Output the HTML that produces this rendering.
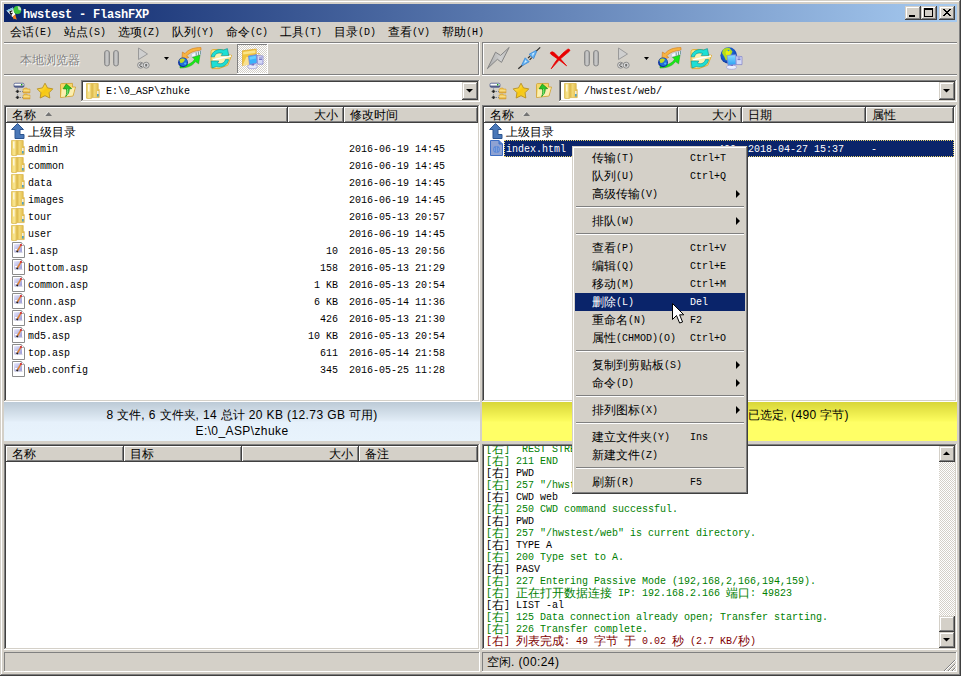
<!DOCTYPE html><html><head><meta charset="utf-8"><style>
*{margin:0;padding:0}
i{font-style:normal}
html,body{width:961px;height:676px;overflow:hidden;background:#d4d0c8}
body>div,body>span,body>svg{position:absolute;display:block}
span{white-space:pre;line-height:12px}
.ms{color:#000;position:absolute}
.ms b,.ms i{position:absolute;top:0;white-space:pre;font-weight:normal;font-style:normal;line-height:12px}
.ms b{top:0px;font-family:"Liberation Mono",monospace;font-size:11px;transform:scaleX(0.90909);transform-origin:0 0}
.ms i{font-family:"Liberation Sans",sans-serif;font-size:12px}
.m{font-family:"Liberation Mono",monospace;font-size:11px;letter-spacing:-0.6px;color:#000;line-height:12px}
.m i, .title i{font-style:normal;font-family:"Liberation Sans",sans-serif;font-size:12px;letter-spacing:0}
.title{font-family:"Liberation Mono",monospace;font-weight:bold;font-size:12px;letter-spacing:-0.2px;color:#fff}
.st{font-family:"Liberation Sans",sans-serif;font-size:12px;letter-spacing:0.4px;color:#000;line-height:12px}
.st i{font-style:normal;font-size:12px;letter-spacing:0}
.dis{font-family:"Liberation Sans",sans-serif;font-size:12px;color:#808080;text-shadow:1px 1px 0 #fff;line-height:12px}
.log div{height:12px;line-height:12px}
</style></head><body><div style="left:0px;top:0px;width:961px;height:676px;background:#d4d0c8"></div><div style="left:0px;top:0px;width:960px;height:1px;background:#d4d0c8"></div><div style="left:0px;top:0px;width:1px;height:675px;background:#d4d0c8"></div><div style="left:1px;top:1px;width:958px;height:1px;background:#ffffff"></div><div style="left:1px;top:1px;width:1px;height:673px;background:#ffffff"></div><div style="left:959px;top:1px;width:1px;height:674px;background:#808080"></div><div style="left:1px;top:674px;width:959px;height:1px;background:#808080"></div><div style="left:960px;top:0px;width:1px;height:676px;background:#404040"></div><div style="left:0px;top:675px;width:961px;height:1px;background:#404040"></div><div style="left:4px;top:4px;width:953px;height:18px;background:linear-gradient(to right,#0a246a,#a6caf0)"></div><span class="title" style="left:23px;top:9px;">hwstest - FlashFXP</span><div style="left:905px;top:6px;width:16px;height:14px;background:#d4d0c8"></div><div style="left:905px;top:6px;width:16px;height:1px;background:#d4d0c8"></div><div style="left:905px;top:6px;width:1px;height:14px;background:#d4d0c8"></div><div style="left:905px;top:19px;width:16px;height:1px;background:#404040"></div><div style="left:920px;top:6px;width:1px;height:14px;background:#404040"></div><div style="left:906px;top:7px;width:14px;height:1px;background:#ffffff"></div><div style="left:906px;top:7px;width:1px;height:12px;background:#ffffff"></div><div style="left:906px;top:18px;width:14px;height:1px;background:#808080"></div><div style="left:919px;top:7px;width:1px;height:12px;background:#808080"></div><div style="left:921px;top:6px;width:16px;height:14px;background:#d4d0c8"></div><div style="left:921px;top:6px;width:16px;height:1px;background:#d4d0c8"></div><div style="left:921px;top:6px;width:1px;height:14px;background:#d4d0c8"></div><div style="left:921px;top:19px;width:16px;height:1px;background:#404040"></div><div style="left:936px;top:6px;width:1px;height:14px;background:#404040"></div><div style="left:922px;top:7px;width:14px;height:1px;background:#ffffff"></div><div style="left:922px;top:7px;width:1px;height:12px;background:#ffffff"></div><div style="left:922px;top:18px;width:14px;height:1px;background:#808080"></div><div style="left:935px;top:7px;width:1px;height:12px;background:#808080"></div><div style="left:939px;top:6px;width:16px;height:14px;background:#d4d0c8"></div><div style="left:939px;top:6px;width:16px;height:1px;background:#d4d0c8"></div><div style="left:939px;top:6px;width:1px;height:14px;background:#d4d0c8"></div><div style="left:939px;top:19px;width:16px;height:1px;background:#404040"></div><div style="left:954px;top:6px;width:1px;height:14px;background:#404040"></div><div style="left:940px;top:7px;width:14px;height:1px;background:#ffffff"></div><div style="left:940px;top:7px;width:1px;height:12px;background:#ffffff"></div><div style="left:940px;top:18px;width:14px;height:1px;background:#808080"></div><div style="left:953px;top:7px;width:1px;height:12px;background:#808080"></div><svg style="left:905px;top:6px;" width="16" height="14" viewBox="0 0 16 14"><rect x="4" y="9" width="6" height="2" fill="#000"/></svg><svg style="left:921px;top:6px;" width="16" height="14" viewBox="0 0 16 14"><rect x="3.5" y="2.5" width="8" height="8" fill="none" stroke="#000"/><rect x="3" y="2" width="9" height="2" fill="#000"/></svg><svg style="left:939px;top:6px;" width="16" height="14" viewBox="0 0 16 14"><path d="M4 3 L11 10 M5 3 L12 10 M11 3 L4 10 M12 3 L5 10" stroke="#000" stroke-width="1"/></svg><span class="ms" style="left:10px;top:26px;"><i style="left:0px">会话</i><b style="left:24px">(E)</b></span><span class="ms" style="left:64px;top:26px;"><i style="left:0px">站点</i><b style="left:24px">(S)</b></span><span class="ms" style="left:118px;top:26px;"><i style="left:0px">选项</i><b style="left:24px">(Z)</b></span><span class="ms" style="left:172px;top:26px;"><i style="left:0px">队列</i><b style="left:24px">(Y)</b></span><span class="ms" style="left:226px;top:26px;"><i style="left:0px">命令</i><b style="left:24px">(C)</b></span><span class="ms" style="left:280px;top:26px;"><i style="left:0px">工具</i><b style="left:24px">(T)</b></span><span class="ms" style="left:334px;top:26px;"><i style="left:0px">目录</i><b style="left:24px">(D)</b></span><span class="ms" style="left:388px;top:26px;"><i style="left:0px">查看</i><b style="left:24px">(V)</b></span><span class="ms" style="left:442px;top:26px;"><i style="left:0px">帮助</i><b style="left:24px">(H)</b></span><div style="left:4px;top:42px;width:475px;height:1px;background:#808080"></div><div style="left:4px;top:43px;width:476px;height:1px;background:#ffffff"></div><div style="left:478px;top:42px;width:1px;height:33px;background:#808080"></div><div style="left:479px;top:42px;width:1px;height:34px;background:#ffffff"></div><div style="left:4px;top:74px;width:475px;height:1px;background:#808080"></div><div style="left:4px;top:75px;width:476px;height:1px;background:#ffffff"></div><div style="left:482px;top:42px;width:475px;height:1px;background:#808080"></div><div style="left:483px;top:43px;width:474px;height:1px;background:#ffffff"></div><div style="left:482px;top:42px;width:1px;height:33px;background:#808080"></div><div style="left:483px;top:43px;width:1px;height:32px;background:#ffffff"></div><div style="left:482px;top:74px;width:475px;height:1px;background:#808080"></div><div style="left:482px;top:75px;width:475px;height:1px;background:#ffffff"></div><div style="left:81px;top:80px;width:399px;height:22px;background:#ffffff"></div><div style="left:81px;top:80px;width:399px;height:1px;background:#808080"></div><div style="left:81px;top:80px;width:1px;height:22px;background:#808080"></div><div style="left:81px;top:101px;width:399px;height:1px;background:#ffffff"></div><div style="left:479px;top:80px;width:1px;height:22px;background:#ffffff"></div><div style="left:82px;top:81px;width:397px;height:1px;background:#404040"></div><div style="left:82px;top:81px;width:1px;height:20px;background:#404040"></div><div style="left:82px;top:100px;width:397px;height:1px;background:#d4d0c8"></div><div style="left:478px;top:81px;width:1px;height:20px;background:#d4d0c8"></div><div style="left:462px;top:82px;width:16px;height:18px;background:#d4d0c8"></div><div style="left:462px;top:82px;width:16px;height:1px;background:#d4d0c8"></div><div style="left:462px;top:82px;width:1px;height:18px;background:#d4d0c8"></div><div style="left:462px;top:99px;width:16px;height:1px;background:#404040"></div><div style="left:477px;top:82px;width:1px;height:18px;background:#404040"></div><div style="left:463px;top:83px;width:14px;height:1px;background:#ffffff"></div><div style="left:463px;top:83px;width:1px;height:16px;background:#ffffff"></div><div style="left:463px;top:98px;width:14px;height:1px;background:#808080"></div><div style="left:476px;top:83px;width:1px;height:16px;background:#808080"></div><svg style="left:462px;top:82px;" width="16" height="18" viewBox="0 0 16 18"><path d="M4 7 H11 L7.5 10.5 Z" fill="#000"/></svg><span class="ms" style="left:106px;top:85px;"><b style="left:0px">E:\0_ASP\zhuke</b></span><div style="left:559px;top:80px;width:398px;height:22px;background:#ffffff"></div><div style="left:559px;top:80px;width:398px;height:1px;background:#808080"></div><div style="left:559px;top:80px;width:1px;height:22px;background:#808080"></div><div style="left:559px;top:101px;width:398px;height:1px;background:#ffffff"></div><div style="left:956px;top:80px;width:1px;height:22px;background:#ffffff"></div><div style="left:560px;top:81px;width:396px;height:1px;background:#404040"></div><div style="left:560px;top:81px;width:1px;height:20px;background:#404040"></div><div style="left:560px;top:100px;width:396px;height:1px;background:#d4d0c8"></div><div style="left:955px;top:81px;width:1px;height:20px;background:#d4d0c8"></div><div style="left:939px;top:82px;width:16px;height:18px;background:#d4d0c8"></div><div style="left:939px;top:82px;width:16px;height:1px;background:#d4d0c8"></div><div style="left:939px;top:82px;width:1px;height:18px;background:#d4d0c8"></div><div style="left:939px;top:99px;width:16px;height:1px;background:#404040"></div><div style="left:954px;top:82px;width:1px;height:18px;background:#404040"></div><div style="left:940px;top:83px;width:14px;height:1px;background:#ffffff"></div><div style="left:940px;top:83px;width:1px;height:16px;background:#ffffff"></div><div style="left:940px;top:98px;width:14px;height:1px;background:#808080"></div><div style="left:953px;top:83px;width:1px;height:16px;background:#808080"></div><svg style="left:939px;top:82px;" width="16" height="18" viewBox="0 0 16 18"><path d="M4 7 H11 L7.5 10.5 Z" fill="#000"/></svg><span class="ms" style="left:584px;top:85px;"><b style="left:0px">/hwstest/web/</b></span><div style="left:4px;top:105px;width:476px;height:297px;background:#ffffff"></div><div style="left:4px;top:105px;width:476px;height:1px;background:#808080"></div><div style="left:4px;top:105px;width:1px;height:297px;background:#808080"></div><div style="left:4px;top:401px;width:476px;height:1px;background:#ffffff"></div><div style="left:479px;top:105px;width:1px;height:297px;background:#ffffff"></div><div style="left:5px;top:106px;width:474px;height:1px;background:#404040"></div><div style="left:5px;top:106px;width:1px;height:295px;background:#404040"></div><div style="left:5px;top:400px;width:474px;height:1px;background:#d4d0c8"></div><div style="left:478px;top:106px;width:1px;height:295px;background:#d4d0c8"></div><div style="left:482px;top:105px;width:475px;height:297px;background:#ffffff"></div><div style="left:482px;top:105px;width:475px;height:1px;background:#808080"></div><div style="left:482px;top:105px;width:1px;height:297px;background:#808080"></div><div style="left:482px;top:401px;width:475px;height:1px;background:#ffffff"></div><div style="left:956px;top:105px;width:1px;height:297px;background:#ffffff"></div><div style="left:483px;top:106px;width:473px;height:1px;background:#404040"></div><div style="left:483px;top:106px;width:1px;height:295px;background:#404040"></div><div style="left:483px;top:400px;width:473px;height:1px;background:#d4d0c8"></div><div style="left:955px;top:106px;width:1px;height:295px;background:#d4d0c8"></div><div style="left:4px;top:444px;width:476px;height:206px;background:#ffffff"></div><div style="left:4px;top:444px;width:476px;height:1px;background:#808080"></div><div style="left:4px;top:444px;width:1px;height:206px;background:#808080"></div><div style="left:4px;top:649px;width:476px;height:1px;background:#ffffff"></div><div style="left:479px;top:444px;width:1px;height:206px;background:#ffffff"></div><div style="left:5px;top:445px;width:474px;height:1px;background:#404040"></div><div style="left:5px;top:445px;width:1px;height:204px;background:#404040"></div><div style="left:5px;top:648px;width:474px;height:1px;background:#d4d0c8"></div><div style="left:478px;top:445px;width:1px;height:204px;background:#d4d0c8"></div><div style="left:482px;top:444px;width:475px;height:206px;background:#ffffff"></div><div style="left:482px;top:444px;width:475px;height:1px;background:#808080"></div><div style="left:482px;top:444px;width:1px;height:206px;background:#808080"></div><div style="left:482px;top:649px;width:475px;height:1px;background:#ffffff"></div><div style="left:956px;top:444px;width:1px;height:206px;background:#ffffff"></div><div style="left:483px;top:445px;width:473px;height:1px;background:#404040"></div><div style="left:483px;top:445px;width:1px;height:204px;background:#404040"></div><div style="left:483px;top:648px;width:473px;height:1px;background:#d4d0c8"></div><div style="left:955px;top:445px;width:1px;height:204px;background:#d4d0c8"></div><div style="left:6px;top:107px;width:282px;height:16px;background:#d4d0c8"></div><div style="left:6px;top:107px;width:282px;height:1px;background:#ffffff"></div><div style="left:6px;top:107px;width:1px;height:16px;background:#ffffff"></div><div style="left:6px;top:122px;width:282px;height:1px;background:#404040"></div><div style="left:287px;top:107px;width:1px;height:16px;background:#404040"></div><div style="left:7px;top:121px;width:280px;height:1px;background:#808080"></div><div style="left:286px;top:108px;width:1px;height:14px;background:#808080"></div><span class="ms" style="left:12px;top:109px;"><i style="left:0px">名称</i></span><div style="left:288px;top:107px;width:56px;height:16px;background:#d4d0c8"></div><div style="left:288px;top:107px;width:56px;height:1px;background:#ffffff"></div><div style="left:288px;top:107px;width:1px;height:16px;background:#ffffff"></div><div style="left:288px;top:122px;width:56px;height:1px;background:#404040"></div><div style="left:343px;top:107px;width:1px;height:16px;background:#404040"></div><div style="left:289px;top:121px;width:54px;height:1px;background:#808080"></div><div style="left:342px;top:108px;width:1px;height:14px;background:#808080"></div><span class="ms" style="left:314px;top:109px;"><i style="left:0px">大小</i></span><div style="left:344px;top:107px;width:134px;height:16px;background:#d4d0c8"></div><div style="left:344px;top:107px;width:134px;height:1px;background:#ffffff"></div><div style="left:344px;top:107px;width:1px;height:16px;background:#ffffff"></div><div style="left:344px;top:122px;width:134px;height:1px;background:#404040"></div><div style="left:477px;top:107px;width:1px;height:16px;background:#404040"></div><div style="left:345px;top:121px;width:132px;height:1px;background:#808080"></div><div style="left:476px;top:108px;width:1px;height:14px;background:#808080"></div><span class="ms" style="left:350px;top:109px;"><i style="left:0px">修改时间</i></span><div style="left:484px;top:107px;width:194px;height:16px;background:#d4d0c8"></div><div style="left:484px;top:107px;width:194px;height:1px;background:#ffffff"></div><div style="left:484px;top:107px;width:1px;height:16px;background:#ffffff"></div><div style="left:484px;top:122px;width:194px;height:1px;background:#404040"></div><div style="left:677px;top:107px;width:1px;height:16px;background:#404040"></div><div style="left:485px;top:121px;width:192px;height:1px;background:#808080"></div><div style="left:676px;top:108px;width:1px;height:14px;background:#808080"></div><span class="ms" style="left:490px;top:109px;"><i style="left:0px">名称</i></span><div style="left:678px;top:107px;width:64px;height:16px;background:#d4d0c8"></div><div style="left:678px;top:107px;width:64px;height:1px;background:#ffffff"></div><div style="left:678px;top:107px;width:1px;height:16px;background:#ffffff"></div><div style="left:678px;top:122px;width:64px;height:1px;background:#404040"></div><div style="left:741px;top:107px;width:1px;height:16px;background:#404040"></div><div style="left:679px;top:121px;width:62px;height:1px;background:#808080"></div><div style="left:740px;top:108px;width:1px;height:14px;background:#808080"></div><span class="ms" style="left:712px;top:109px;"><i style="left:0px">大小</i></span><div style="left:742px;top:107px;width:124px;height:16px;background:#d4d0c8"></div><div style="left:742px;top:107px;width:124px;height:1px;background:#ffffff"></div><div style="left:742px;top:107px;width:1px;height:16px;background:#ffffff"></div><div style="left:742px;top:122px;width:124px;height:1px;background:#404040"></div><div style="left:865px;top:107px;width:1px;height:16px;background:#404040"></div><div style="left:743px;top:121px;width:122px;height:1px;background:#808080"></div><div style="left:864px;top:108px;width:1px;height:14px;background:#808080"></div><span class="ms" style="left:748px;top:109px;"><i style="left:0px">日期</i></span><div style="left:866px;top:107px;width:88px;height:16px;background:#d4d0c8"></div><div style="left:866px;top:107px;width:88px;height:1px;background:#ffffff"></div><div style="left:866px;top:107px;width:1px;height:16px;background:#ffffff"></div><div style="left:866px;top:122px;width:88px;height:1px;background:#404040"></div><div style="left:953px;top:107px;width:1px;height:16px;background:#404040"></div><div style="left:867px;top:121px;width:86px;height:1px;background:#808080"></div><div style="left:952px;top:108px;width:1px;height:14px;background:#808080"></div><span class="ms" style="left:872px;top:109px;"><i style="left:0px">属性</i></span><div style="left:6px;top:446px;width:118px;height:16px;background:#d4d0c8"></div><div style="left:6px;top:446px;width:118px;height:1px;background:#ffffff"></div><div style="left:6px;top:446px;width:1px;height:16px;background:#ffffff"></div><div style="left:6px;top:461px;width:118px;height:1px;background:#404040"></div><div style="left:123px;top:446px;width:1px;height:16px;background:#404040"></div><div style="left:7px;top:460px;width:116px;height:1px;background:#808080"></div><div style="left:122px;top:447px;width:1px;height:14px;background:#808080"></div><span class="ms" style="left:12px;top:448px;"><i style="left:0px">名称</i></span><div style="left:124px;top:446px;width:118px;height:16px;background:#d4d0c8"></div><div style="left:124px;top:446px;width:118px;height:1px;background:#ffffff"></div><div style="left:124px;top:446px;width:1px;height:16px;background:#ffffff"></div><div style="left:124px;top:461px;width:118px;height:1px;background:#404040"></div><div style="left:241px;top:446px;width:1px;height:16px;background:#404040"></div><div style="left:125px;top:460px;width:116px;height:1px;background:#808080"></div><div style="left:240px;top:447px;width:1px;height:14px;background:#808080"></div><span class="ms" style="left:130px;top:448px;"><i style="left:0px">目标</i></span><div style="left:242px;top:446px;width:117px;height:16px;background:#d4d0c8"></div><div style="left:242px;top:446px;width:117px;height:1px;background:#ffffff"></div><div style="left:242px;top:446px;width:1px;height:16px;background:#ffffff"></div><div style="left:242px;top:461px;width:117px;height:1px;background:#404040"></div><div style="left:358px;top:446px;width:1px;height:16px;background:#404040"></div><div style="left:243px;top:460px;width:115px;height:1px;background:#808080"></div><div style="left:357px;top:447px;width:1px;height:14px;background:#808080"></div><span class="ms" style="left:329px;top:448px;"><i style="left:0px">大小</i></span><div style="left:359px;top:446px;width:119px;height:16px;background:#d4d0c8"></div><div style="left:359px;top:446px;width:119px;height:1px;background:#ffffff"></div><div style="left:359px;top:446px;width:1px;height:16px;background:#ffffff"></div><div style="left:359px;top:461px;width:119px;height:1px;background:#404040"></div><div style="left:477px;top:446px;width:1px;height:16px;background:#404040"></div><div style="left:360px;top:460px;width:117px;height:1px;background:#808080"></div><div style="left:476px;top:447px;width:1px;height:14px;background:#808080"></div><span class="ms" style="left:365px;top:448px;"><i style="left:0px">备注</i></span><div style="left:4px;top:402px;width:476px;height:39px;background:linear-gradient(#bccad6 0px,#e2edf7 19px,#e6f1fb 20px,#e8f3fc 39px)"></div><div style="left:482px;top:402px;width:475px;height:39px;background:linear-gradient(#d8d638 0px,#fcfc5e 19px,#ffff66 20px,#ffff66 39px)"></div><span class="st" style="left:4px;top:409px;width:476px;text-align:center">8 <i>文件</i>, 6 <i>文件夹</i>, 14 <i>总计</i> 20 KB (12.73 GB <i>可用</i>)</span><span class="st" style="left:4px;top:425px;width:476px;text-align:center">E:\0_ASP\zhuke</span><span class="st" style="left:507px;top:409px;width:475px;text-align:center">1 <i>文件</i>, 0 <i>文件夹</i>, 1 <i>已选定</i>, (490 <i>字节</i>)</span><div style="left:4px;top:652px;width:476px;height:20px;background:#d4d0c8"></div><div style="left:4px;top:652px;width:476px;height:1px;background:#808080"></div><div style="left:4px;top:652px;width:1px;height:20px;background:#808080"></div><div style="left:4px;top:671px;width:476px;height:1px;background:#ffffff"></div><div style="left:479px;top:652px;width:1px;height:20px;background:#ffffff"></div><div style="left:482px;top:652px;width:475px;height:20px;background:#d4d0c8"></div><div style="left:482px;top:652px;width:475px;height:1px;background:#808080"></div><div style="left:482px;top:652px;width:1px;height:20px;background:#808080"></div><div style="left:482px;top:671px;width:475px;height:1px;background:#ffffff"></div><div style="left:956px;top:652px;width:1px;height:20px;background:#ffffff"></div><span class="st" style="left:487px;top:656px;"><i>空闲</i>. (00:24)</span><svg style="left:11px;top:123px;" width="16" height="16" viewBox="0 0 16 16"><path d="M6.5 0.5 L12.5 6.5 H9 V11.5 H13 V15.5 H4 V6.5 H0.5 Z" fill="#4a78b8" stroke="#2c5590"/></svg><span class="ms" style="left:28px;top:126px;"><i style="left:0px">上级目录</i></span><svg style="left:11px;top:140px;" width="16" height="16" viewBox="0 0 16 16"><defs><linearGradient id="fg1" x1="0" x2="1"><stop offset="0" stop-color="#edcc5c"/><stop offset="0.5" stop-color="#f9e898"/><stop offset="1" stop-color="#e8c454"/></linearGradient><linearGradient id="fg2" x1="0" x2="1"><stop offset="0" stop-color="#dcb43c"/><stop offset="0.4" stop-color="#f2d878"/><stop offset="1" stop-color="#deb640"/></linearGradient></defs><path d="M5.5 0.5 H12.2 V6.5 H13.2 V14.6 H5.5 Z" fill="url(#fg2)" stroke="#dcb850" stroke-width="0.8"/><path d="M0.5 0.8 Q0.5 0.3 1 0.3 H5.8 V15.2 Q3 16.2 0.5 15.2 Z" fill="url(#fg1)" stroke="#dcbc58" stroke-width="0.8"/><rect x="2.2" y="1.5" width="1.2" height="7" fill="#ffffff" opacity="0.85"/><rect x="11.2" y="8" width="1.3" height="3" fill="#f4f8ff"/><rect x="11.2" y="11" width="1.3" height="2.5" fill="#2a9ae8"/></svg><span class="ms" style="left:28px;top:143px;"><b style="left:0px">admin</b></span><span class="ms" style="left:349px;top:143px;"><b style="left:0px">2016-06-19 14:45</b></span><svg style="left:11px;top:157px;" width="16" height="16" viewBox="0 0 16 16"><defs><linearGradient id="fg1" x1="0" x2="1"><stop offset="0" stop-color="#edcc5c"/><stop offset="0.5" stop-color="#f9e898"/><stop offset="1" stop-color="#e8c454"/></linearGradient><linearGradient id="fg2" x1="0" x2="1"><stop offset="0" stop-color="#dcb43c"/><stop offset="0.4" stop-color="#f2d878"/><stop offset="1" stop-color="#deb640"/></linearGradient></defs><path d="M5.5 0.5 H12.2 V6.5 H13.2 V14.6 H5.5 Z" fill="url(#fg2)" stroke="#dcb850" stroke-width="0.8"/><path d="M0.5 0.8 Q0.5 0.3 1 0.3 H5.8 V15.2 Q3 16.2 0.5 15.2 Z" fill="url(#fg1)" stroke="#dcbc58" stroke-width="0.8"/><rect x="2.2" y="1.5" width="1.2" height="7" fill="#ffffff" opacity="0.85"/><rect x="11.2" y="8" width="1.3" height="3" fill="#f4f8ff"/><rect x="11.2" y="11" width="1.3" height="2.5" fill="#2a9ae8"/></svg><span class="ms" style="left:28px;top:160px;"><b style="left:0px">common</b></span><span class="ms" style="left:349px;top:160px;"><b style="left:0px">2016-06-19 14:45</b></span><svg style="left:11px;top:174px;" width="16" height="16" viewBox="0 0 16 16"><defs><linearGradient id="fg1" x1="0" x2="1"><stop offset="0" stop-color="#edcc5c"/><stop offset="0.5" stop-color="#f9e898"/><stop offset="1" stop-color="#e8c454"/></linearGradient><linearGradient id="fg2" x1="0" x2="1"><stop offset="0" stop-color="#dcb43c"/><stop offset="0.4" stop-color="#f2d878"/><stop offset="1" stop-color="#deb640"/></linearGradient></defs><path d="M5.5 0.5 H12.2 V6.5 H13.2 V14.6 H5.5 Z" fill="url(#fg2)" stroke="#dcb850" stroke-width="0.8"/><path d="M0.5 0.8 Q0.5 0.3 1 0.3 H5.8 V15.2 Q3 16.2 0.5 15.2 Z" fill="url(#fg1)" stroke="#dcbc58" stroke-width="0.8"/><rect x="2.2" y="1.5" width="1.2" height="7" fill="#ffffff" opacity="0.85"/><rect x="11.2" y="8" width="1.3" height="3" fill="#f4f8ff"/><rect x="11.2" y="11" width="1.3" height="2.5" fill="#2a9ae8"/></svg><span class="ms" style="left:28px;top:177px;"><b style="left:0px">data</b></span><span class="ms" style="left:349px;top:177px;"><b style="left:0px">2016-06-19 14:45</b></span><svg style="left:11px;top:191px;" width="16" height="16" viewBox="0 0 16 16"><defs><linearGradient id="fg1" x1="0" x2="1"><stop offset="0" stop-color="#edcc5c"/><stop offset="0.5" stop-color="#f9e898"/><stop offset="1" stop-color="#e8c454"/></linearGradient><linearGradient id="fg2" x1="0" x2="1"><stop offset="0" stop-color="#dcb43c"/><stop offset="0.4" stop-color="#f2d878"/><stop offset="1" stop-color="#deb640"/></linearGradient></defs><path d="M5.5 0.5 H12.2 V6.5 H13.2 V14.6 H5.5 Z" fill="url(#fg2)" stroke="#dcb850" stroke-width="0.8"/><path d="M0.5 0.8 Q0.5 0.3 1 0.3 H5.8 V15.2 Q3 16.2 0.5 15.2 Z" fill="url(#fg1)" stroke="#dcbc58" stroke-width="0.8"/><rect x="2.2" y="1.5" width="1.2" height="7" fill="#ffffff" opacity="0.85"/><rect x="11.2" y="8" width="1.3" height="3" fill="#f4f8ff"/><rect x="11.2" y="11" width="1.3" height="2.5" fill="#2a9ae8"/></svg><span class="ms" style="left:28px;top:194px;"><b style="left:0px">images</b></span><span class="ms" style="left:349px;top:194px;"><b style="left:0px">2016-06-19 14:45</b></span><svg style="left:11px;top:208px;" width="16" height="16" viewBox="0 0 16 16"><defs><linearGradient id="fg1" x1="0" x2="1"><stop offset="0" stop-color="#edcc5c"/><stop offset="0.5" stop-color="#f9e898"/><stop offset="1" stop-color="#e8c454"/></linearGradient><linearGradient id="fg2" x1="0" x2="1"><stop offset="0" stop-color="#dcb43c"/><stop offset="0.4" stop-color="#f2d878"/><stop offset="1" stop-color="#deb640"/></linearGradient></defs><path d="M5.5 0.5 H12.2 V6.5 H13.2 V14.6 H5.5 Z" fill="url(#fg2)" stroke="#dcb850" stroke-width="0.8"/><path d="M0.5 0.8 Q0.5 0.3 1 0.3 H5.8 V15.2 Q3 16.2 0.5 15.2 Z" fill="url(#fg1)" stroke="#dcbc58" stroke-width="0.8"/><rect x="2.2" y="1.5" width="1.2" height="7" fill="#ffffff" opacity="0.85"/><rect x="11.2" y="8" width="1.3" height="3" fill="#f4f8ff"/><rect x="11.2" y="11" width="1.3" height="2.5" fill="#2a9ae8"/></svg><span class="ms" style="left:28px;top:211px;"><b style="left:0px">tour</b></span><span class="ms" style="left:349px;top:211px;"><b style="left:0px">2016-05-13 20:57</b></span><svg style="left:11px;top:225px;" width="16" height="16" viewBox="0 0 16 16"><defs><linearGradient id="fg1" x1="0" x2="1"><stop offset="0" stop-color="#edcc5c"/><stop offset="0.5" stop-color="#f9e898"/><stop offset="1" stop-color="#e8c454"/></linearGradient><linearGradient id="fg2" x1="0" x2="1"><stop offset="0" stop-color="#dcb43c"/><stop offset="0.4" stop-color="#f2d878"/><stop offset="1" stop-color="#deb640"/></linearGradient></defs><path d="M5.5 0.5 H12.2 V6.5 H13.2 V14.6 H5.5 Z" fill="url(#fg2)" stroke="#dcb850" stroke-width="0.8"/><path d="M0.5 0.8 Q0.5 0.3 1 0.3 H5.8 V15.2 Q3 16.2 0.5 15.2 Z" fill="url(#fg1)" stroke="#dcbc58" stroke-width="0.8"/><rect x="2.2" y="1.5" width="1.2" height="7" fill="#ffffff" opacity="0.85"/><rect x="11.2" y="8" width="1.3" height="3" fill="#f4f8ff"/><rect x="11.2" y="11" width="1.3" height="2.5" fill="#2a9ae8"/></svg><span class="ms" style="left:28px;top:228px;"><b style="left:0px">user</b></span><span class="ms" style="left:349px;top:228px;"><b style="left:0px">2016-06-19 14:45</b></span><svg style="left:11px;top:242px;" width="16" height="16" viewBox="0 0 16 16"><path d="M1.5 0.5 H10.5 L13.5 3.5 V15.5 H1.5 Z" fill="#fff" stroke="#8c8c8c"/><path d="M10.5 0.5 V3.5 H13.5" fill="#fff" stroke="#b0b0b0"/><defs><linearGradient id="fpg" x1="0" y1="0" x2="1" y2="1"><stop offset="0" stop-color="#e6e6fa"/><stop offset="1" stop-color="#9a9ad8"/></linearGradient></defs><rect x="3" y="2.2" width="8" height="7.6" fill="url(#fpg)"/><rect x="3.5" y="9.8" width="8" height="0.8" fill="#8080b0" opacity="0.6"/><path d="M10.2 2.6 L6.2 9.4" stroke="#e08030" stroke-width="1.6"/><path d="M10.4 2.2 L9.6 3.6" stroke="#d02030" stroke-width="1.8"/><path d="M6.6 8.8 L5.8 10" stroke="#202020" stroke-width="1.8"/><path d="M4 7.6 H6" stroke="#fff" stroke-width="1.4"/></svg><span class="ms" style="left:28px;top:245px;"><b style="left:0px">1.asp</b></span><span class="ms" style="left:326px;top:245px;"><b style="left:0px">10</b></span><span class="ms" style="left:349px;top:245px;"><b style="left:0px">2016-05-13 20:56</b></span><svg style="left:11px;top:259px;" width="16" height="16" viewBox="0 0 16 16"><path d="M1.5 0.5 H10.5 L13.5 3.5 V15.5 H1.5 Z" fill="#fff" stroke="#8c8c8c"/><path d="M10.5 0.5 V3.5 H13.5" fill="#fff" stroke="#b0b0b0"/><defs><linearGradient id="fpg" x1="0" y1="0" x2="1" y2="1"><stop offset="0" stop-color="#e6e6fa"/><stop offset="1" stop-color="#9a9ad8"/></linearGradient></defs><rect x="3" y="2.2" width="8" height="7.6" fill="url(#fpg)"/><rect x="3.5" y="9.8" width="8" height="0.8" fill="#8080b0" opacity="0.6"/><path d="M10.2 2.6 L6.2 9.4" stroke="#e08030" stroke-width="1.6"/><path d="M10.4 2.2 L9.6 3.6" stroke="#d02030" stroke-width="1.8"/><path d="M6.6 8.8 L5.8 10" stroke="#202020" stroke-width="1.8"/><path d="M4 7.6 H6" stroke="#fff" stroke-width="1.4"/></svg><span class="ms" style="left:28px;top:262px;"><b style="left:0px">bottom.asp</b></span><span class="ms" style="left:320px;top:262px;"><b style="left:0px">158</b></span><span class="ms" style="left:349px;top:262px;"><b style="left:0px">2016-05-13 21:29</b></span><svg style="left:11px;top:276px;" width="16" height="16" viewBox="0 0 16 16"><path d="M1.5 0.5 H10.5 L13.5 3.5 V15.5 H1.5 Z" fill="#fff" stroke="#8c8c8c"/><path d="M10.5 0.5 V3.5 H13.5" fill="#fff" stroke="#b0b0b0"/><defs><linearGradient id="fpg" x1="0" y1="0" x2="1" y2="1"><stop offset="0" stop-color="#e6e6fa"/><stop offset="1" stop-color="#9a9ad8"/></linearGradient></defs><rect x="3" y="2.2" width="8" height="7.6" fill="url(#fpg)"/><rect x="3.5" y="9.8" width="8" height="0.8" fill="#8080b0" opacity="0.6"/><path d="M10.2 2.6 L6.2 9.4" stroke="#e08030" stroke-width="1.6"/><path d="M10.4 2.2 L9.6 3.6" stroke="#d02030" stroke-width="1.8"/><path d="M6.6 8.8 L5.8 10" stroke="#202020" stroke-width="1.8"/><path d="M4 7.6 H6" stroke="#fff" stroke-width="1.4"/></svg><span class="ms" style="left:28px;top:279px;"><b style="left:0px">common.asp</b></span><span class="ms" style="left:314px;top:279px;"><b style="left:0px">1 KB</b></span><span class="ms" style="left:349px;top:279px;"><b style="left:0px">2016-05-13 20:54</b></span><svg style="left:11px;top:293px;" width="16" height="16" viewBox="0 0 16 16"><path d="M1.5 0.5 H10.5 L13.5 3.5 V15.5 H1.5 Z" fill="#fff" stroke="#8c8c8c"/><path d="M10.5 0.5 V3.5 H13.5" fill="#fff" stroke="#b0b0b0"/><defs><linearGradient id="fpg" x1="0" y1="0" x2="1" y2="1"><stop offset="0" stop-color="#e6e6fa"/><stop offset="1" stop-color="#9a9ad8"/></linearGradient></defs><rect x="3" y="2.2" width="8" height="7.6" fill="url(#fpg)"/><rect x="3.5" y="9.8" width="8" height="0.8" fill="#8080b0" opacity="0.6"/><path d="M10.2 2.6 L6.2 9.4" stroke="#e08030" stroke-width="1.6"/><path d="M10.4 2.2 L9.6 3.6" stroke="#d02030" stroke-width="1.8"/><path d="M6.6 8.8 L5.8 10" stroke="#202020" stroke-width="1.8"/><path d="M4 7.6 H6" stroke="#fff" stroke-width="1.4"/></svg><span class="ms" style="left:28px;top:296px;"><b style="left:0px">conn.asp</b></span><span class="ms" style="left:314px;top:296px;"><b style="left:0px">6 KB</b></span><span class="ms" style="left:349px;top:296px;"><b style="left:0px">2016-05-14 11:36</b></span><svg style="left:11px;top:310px;" width="16" height="16" viewBox="0 0 16 16"><path d="M1.5 0.5 H10.5 L13.5 3.5 V15.5 H1.5 Z" fill="#fff" stroke="#8c8c8c"/><path d="M10.5 0.5 V3.5 H13.5" fill="#fff" stroke="#b0b0b0"/><defs><linearGradient id="fpg" x1="0" y1="0" x2="1" y2="1"><stop offset="0" stop-color="#e6e6fa"/><stop offset="1" stop-color="#9a9ad8"/></linearGradient></defs><rect x="3" y="2.2" width="8" height="7.6" fill="url(#fpg)"/><rect x="3.5" y="9.8" width="8" height="0.8" fill="#8080b0" opacity="0.6"/><path d="M10.2 2.6 L6.2 9.4" stroke="#e08030" stroke-width="1.6"/><path d="M10.4 2.2 L9.6 3.6" stroke="#d02030" stroke-width="1.8"/><path d="M6.6 8.8 L5.8 10" stroke="#202020" stroke-width="1.8"/><path d="M4 7.6 H6" stroke="#fff" stroke-width="1.4"/></svg><span class="ms" style="left:28px;top:313px;"><b style="left:0px">index.asp</b></span><span class="ms" style="left:320px;top:313px;"><b style="left:0px">426</b></span><span class="ms" style="left:349px;top:313px;"><b style="left:0px">2016-05-13 21:30</b></span><svg style="left:11px;top:327px;" width="16" height="16" viewBox="0 0 16 16"><path d="M1.5 0.5 H10.5 L13.5 3.5 V15.5 H1.5 Z" fill="#fff" stroke="#8c8c8c"/><path d="M10.5 0.5 V3.5 H13.5" fill="#fff" stroke="#b0b0b0"/><defs><linearGradient id="fpg" x1="0" y1="0" x2="1" y2="1"><stop offset="0" stop-color="#e6e6fa"/><stop offset="1" stop-color="#9a9ad8"/></linearGradient></defs><rect x="3" y="2.2" width="8" height="7.6" fill="url(#fpg)"/><rect x="3.5" y="9.8" width="8" height="0.8" fill="#8080b0" opacity="0.6"/><path d="M10.2 2.6 L6.2 9.4" stroke="#e08030" stroke-width="1.6"/><path d="M10.4 2.2 L9.6 3.6" stroke="#d02030" stroke-width="1.8"/><path d="M6.6 8.8 L5.8 10" stroke="#202020" stroke-width="1.8"/><path d="M4 7.6 H6" stroke="#fff" stroke-width="1.4"/></svg><span class="ms" style="left:28px;top:330px;"><b style="left:0px">md5.asp</b></span><span class="ms" style="left:308px;top:330px;"><b style="left:0px">10 KB</b></span><span class="ms" style="left:349px;top:330px;"><b style="left:0px">2016-05-13 20:54</b></span><svg style="left:11px;top:344px;" width="16" height="16" viewBox="0 0 16 16"><path d="M1.5 0.5 H10.5 L13.5 3.5 V15.5 H1.5 Z" fill="#fff" stroke="#8c8c8c"/><path d="M10.5 0.5 V3.5 H13.5" fill="#fff" stroke="#b0b0b0"/><defs><linearGradient id="fpg" x1="0" y1="0" x2="1" y2="1"><stop offset="0" stop-color="#e6e6fa"/><stop offset="1" stop-color="#9a9ad8"/></linearGradient></defs><rect x="3" y="2.2" width="8" height="7.6" fill="url(#fpg)"/><rect x="3.5" y="9.8" width="8" height="0.8" fill="#8080b0" opacity="0.6"/><path d="M10.2 2.6 L6.2 9.4" stroke="#e08030" stroke-width="1.6"/><path d="M10.4 2.2 L9.6 3.6" stroke="#d02030" stroke-width="1.8"/><path d="M6.6 8.8 L5.8 10" stroke="#202020" stroke-width="1.8"/><path d="M4 7.6 H6" stroke="#fff" stroke-width="1.4"/></svg><span class="ms" style="left:28px;top:347px;"><b style="left:0px">top.asp</b></span><span class="ms" style="left:320px;top:347px;"><b style="left:0px">611</b></span><span class="ms" style="left:349px;top:347px;"><b style="left:0px">2016-05-14 21:58</b></span><svg style="left:11px;top:361px;" width="16" height="16" viewBox="0 0 16 16"><path d="M1.5 0.5 H10.5 L13.5 3.5 V15.5 H1.5 Z" fill="#fff" stroke="#8c8c8c"/><path d="M10.5 0.5 V3.5 H13.5" fill="#fff" stroke="#b0b0b0"/><defs><linearGradient id="fpg" x1="0" y1="0" x2="1" y2="1"><stop offset="0" stop-color="#e6e6fa"/><stop offset="1" stop-color="#9a9ad8"/></linearGradient></defs><rect x="3" y="2.2" width="8" height="7.6" fill="url(#fpg)"/><rect x="3.5" y="9.8" width="8" height="0.8" fill="#8080b0" opacity="0.6"/><path d="M10.2 2.6 L6.2 9.4" stroke="#e08030" stroke-width="1.6"/><path d="M10.4 2.2 L9.6 3.6" stroke="#d02030" stroke-width="1.8"/><path d="M6.6 8.8 L5.8 10" stroke="#202020" stroke-width="1.8"/><path d="M4 7.6 H6" stroke="#fff" stroke-width="1.4"/></svg><span class="ms" style="left:28px;top:364px;"><b style="left:0px">web.config</b></span><span class="ms" style="left:320px;top:364px;"><b style="left:0px">345</b></span><span class="ms" style="left:349px;top:364px;"><b style="left:0px">2016-05-25 11:28</b></span><svg style="left:489px;top:123px;" width="16" height="16" viewBox="0 0 16 16"><path d="M6.5 0.5 L12.5 6.5 H9 V11.5 H13 V15.5 H4 V6.5 H0.5 Z" fill="#4a78b8" stroke="#2c5590"/></svg><span class="ms" style="left:506px;top:126px;"><i style="left:0px">上级目录</i></span><div style="left:504px;top:140px;width:450px;height:17px;background:#0a246a;outline:1px dotted #e8d46a;outline-offset:-1px"></div><svg style="left:489px;top:140px;" width="16" height="16" viewBox="0 0 16 16"><path d="M1.5 0.5 H10 L13.5 4 V15.5 H1.5 Z" fill="#8ea2d2" stroke="#3c6ec4"/><path d="M10 0.5 V4 H13.5" fill="#5a86d0" stroke="#3c6ec4"/><circle cx="7.5" cy="9.4" r="3.4" fill="#5c8ad8"/><path d="M7.5 6.5 V12.3 M5.6 8 V11 M9.4 8 V11" stroke="#8ea8dc" stroke-width="0.7"/></svg><span class="ms" style="left:506px;top:143px;color:#fff"><b style="left:0px">index.html</b></span><span class="ms" style="left:718px;top:143px;color:#fff"><b style="left:0px">490</b></span><span class="ms" style="left:748px;top:143px;color:#fff"><b style="left:0px">2018-04-27 15:37</b></span><span class="ms" style="left:871px;top:143px;color:#fff"><b style="left:0px">-</b></span><div style="left:484px;top:446px;width:455px;height:202px;overflow:hidden"><span class="ms" style="left:2px;top:-3px;color:#008000"><b style="left:0px">[</b><i style="left:6px">右</i><b style="left:18px">]  REST STREAM</b></span><span class="ms" style="left:2px;top:9px;color:#008000"><b style="left:0px">[</b><i style="left:6px">右</i><b style="left:18px">] 211 END</b></span><span class="ms" style="left:2px;top:21px;color:#000000"><b style="left:0px">[</b><i style="left:6px">右</i><b style="left:18px">] PWD</b></span><span class="ms" style="left:2px;top:33px;color:#008000"><b style="left:0px">[</b><i style="left:6px">右</i><b style="left:18px">] 257 &quot;/hwstest&quot; is current directory.</b></span><span class="ms" style="left:2px;top:45px;color:#000000"><b style="left:0px">[</b><i style="left:6px">右</i><b style="left:18px">] CWD web</b></span><span class="ms" style="left:2px;top:57px;color:#008000"><b style="left:0px">[</b><i style="left:6px">右</i><b style="left:18px">] 250 CWD command successful.</b></span><span class="ms" style="left:2px;top:69px;color:#000000"><b style="left:0px">[</b><i style="left:6px">右</i><b style="left:18px">] PWD</b></span><span class="ms" style="left:2px;top:81px;color:#008000"><b style="left:0px">[</b><i style="left:6px">右</i><b style="left:18px">] 257 &quot;/hwstest/web&quot; is current directory.</b></span><span class="ms" style="left:2px;top:93px;color:#000000"><b style="left:0px">[</b><i style="left:6px">右</i><b style="left:18px">] TYPE A</b></span><span class="ms" style="left:2px;top:105px;color:#008000"><b style="left:0px">[</b><i style="left:6px">右</i><b style="left:18px">] 200 Type set to A.</b></span><span class="ms" style="left:2px;top:117px;color:#000000"><b style="left:0px">[</b><i style="left:6px">右</i><b style="left:18px">] PASV</b></span><span class="ms" style="left:2px;top:129px;color:#008000"><b style="left:0px">[</b><i style="left:6px">右</i><b style="left:18px">] 227 Entering Passive Mode (192,168,2,166,194,159).</b></span><span class="ms" style="left:2px;top:141px;color:#008000"><b style="left:0px">[</b><i style="left:6px">右</i><b style="left:18px">] </b><i style="left:30px">正在打开数据连接</i><b style="left:126px"> IP: 192.168.2.166 </b><i style="left:240px">端口</i><b style="left:264px">: 49823</b></span><span class="ms" style="left:2px;top:153px;color:#000000"><b style="left:0px">[</b><i style="left:6px">右</i><b style="left:18px">] LIST -al</b></span><span class="ms" style="left:2px;top:165px;color:#008000"><b style="left:0px">[</b><i style="left:6px">右</i><b style="left:18px">] 125 Data connection already open; Transfer starting.</b></span><span class="ms" style="left:2px;top:177px;color:#008000"><b style="left:0px">[</b><i style="left:6px">右</i><b style="left:18px">] 226 Transfer complete.</b></span><span class="ms" style="left:2px;top:189px;color:#800000"><b style="left:0px">[</b><i style="left:6px">右</i><b style="left:18px">] </b><i style="left:30px">列表完成</i><b style="left:78px">: 49 </b><i style="left:108px">字节</i><b style="left:132px"> </b><i style="left:138px">于</i><b style="left:150px"> 0.02 </b><i style="left:186px">秒</i><b style="left:198px"> (2.7 KB/</b><i style="left:252px">秒</i><b style="left:264px">)</b></span></div><div style="left:939px;top:462px;width:16px;height:154px;background:repeating-conic-gradient(#d4d0c8 0 25%,#ffffff 0 50%) 0 0/2px 2px"></div><div style="left:939px;top:446px;width:16px;height:16px;background:#d4d0c8"></div><div style="left:939px;top:446px;width:16px;height:1px;background:#d4d0c8"></div><div style="left:939px;top:446px;width:1px;height:16px;background:#d4d0c8"></div><div style="left:939px;top:461px;width:16px;height:1px;background:#404040"></div><div style="left:954px;top:446px;width:1px;height:16px;background:#404040"></div><div style="left:940px;top:447px;width:14px;height:1px;background:#ffffff"></div><div style="left:940px;top:447px;width:1px;height:14px;background:#ffffff"></div><div style="left:940px;top:460px;width:14px;height:1px;background:#808080"></div><div style="left:953px;top:447px;width:1px;height:14px;background:#808080"></div><svg style="left:939px;top:446px;" width="16" height="16" viewBox="0 0 16 16"><path d="M4 9 H11 L7.5 5.5 Z" fill="#000"/></svg><div style="left:939px;top:616px;width:16px;height:16px;background:#d4d0c8"></div><div style="left:939px;top:616px;width:16px;height:1px;background:#d4d0c8"></div><div style="left:939px;top:616px;width:1px;height:16px;background:#d4d0c8"></div><div style="left:939px;top:631px;width:16px;height:1px;background:#404040"></div><div style="left:954px;top:616px;width:1px;height:16px;background:#404040"></div><div style="left:940px;top:617px;width:14px;height:1px;background:#ffffff"></div><div style="left:940px;top:617px;width:1px;height:14px;background:#ffffff"></div><div style="left:940px;top:630px;width:14px;height:1px;background:#808080"></div><div style="left:953px;top:617px;width:1px;height:14px;background:#808080"></div><div style="left:939px;top:632px;width:16px;height:16px;background:#d4d0c8"></div><div style="left:939px;top:632px;width:16px;height:1px;background:#d4d0c8"></div><div style="left:939px;top:632px;width:1px;height:16px;background:#d4d0c8"></div><div style="left:939px;top:647px;width:16px;height:1px;background:#404040"></div><div style="left:954px;top:632px;width:1px;height:16px;background:#404040"></div><div style="left:940px;top:633px;width:14px;height:1px;background:#ffffff"></div><div style="left:940px;top:633px;width:1px;height:14px;background:#ffffff"></div><div style="left:940px;top:646px;width:14px;height:1px;background:#808080"></div><div style="left:953px;top:633px;width:1px;height:14px;background:#808080"></div><svg style="left:939px;top:632px;" width="16" height="16" viewBox="0 0 16 16"><path d="M4 6 H11 L7.5 9.5 Z" fill="#000"/></svg><svg style="left:941px;top:657px;" width="16" height="16" viewBox="0 0 16 16"><path d="M14 3 L3 14 M14 7 L7 14 M14 11 L11 14" stroke="#808080" stroke-width="1"/><path d="M15 3 L4 14 M15 7 L8 14 M15 11 L12 14" stroke="#fff" stroke-width="1"/></svg><div style="left:572px;top:146px;width:176px;height:348px;background:#d4d0c8"></div><div style="left:572px;top:146px;width:176px;height:1px;background:#d4d0c8"></div><div style="left:572px;top:146px;width:1px;height:348px;background:#d4d0c8"></div><div style="left:572px;top:493px;width:176px;height:1px;background:#404040"></div><div style="left:747px;top:146px;width:1px;height:348px;background:#404040"></div><div style="left:573px;top:147px;width:174px;height:1px;background:#ffffff"></div><div style="left:573px;top:147px;width:1px;height:346px;background:#ffffff"></div><div style="left:573px;top:492px;width:174px;height:1px;background:#808080"></div><div style="left:746px;top:147px;width:1px;height:346px;background:#808080"></div><span class="ms" style="left:592px;top:152px;color:#000"><i style="left:0px">传输</i><b style="left:24px">(T)</b></span><span class="ms" style="left:690px;top:152px;color:#000"><b style="left:0px">Ctrl+T</b></span><span class="ms" style="left:592px;top:170px;color:#000"><i style="left:0px">队列</i><b style="left:24px">(U)</b></span><span class="ms" style="left:690px;top:170px;color:#000"><b style="left:0px">Ctrl+Q</b></span><span class="ms" style="left:592px;top:188px;color:#000"><i style="left:0px">高级传输</i><b style="left:48px">(V)</b></span><svg style="left:734px;top:189px;" width="8" height="10" viewBox="0 0 8 10"><path d="M2 1 L6 5 L2 9 Z" fill="#000"/></svg><div style="left:576px;top:206px;width:168px;height:1px;background:#808080"></div><div style="left:576px;top:207px;width:168px;height:1px;background:#ffffff"></div><span class="ms" style="left:592px;top:215px;color:#000"><i style="left:0px">排队</i><b style="left:24px">(W)</b></span><svg style="left:734px;top:216px;" width="8" height="10" viewBox="0 0 8 10"><path d="M2 1 L6 5 L2 9 Z" fill="#000"/></svg><div style="left:576px;top:233px;width:168px;height:1px;background:#808080"></div><div style="left:576px;top:234px;width:168px;height:1px;background:#ffffff"></div><span class="ms" style="left:592px;top:242px;color:#000"><i style="left:0px">查看</i><b style="left:24px">(P)</b></span><span class="ms" style="left:690px;top:242px;color:#000"><b style="left:0px">Ctrl+V</b></span><span class="ms" style="left:592px;top:260px;color:#000"><i style="left:0px">编辑</i><b style="left:24px">(Q)</b></span><span class="ms" style="left:690px;top:260px;color:#000"><b style="left:0px">Ctrl+E</b></span><span class="ms" style="left:592px;top:278px;color:#000"><i style="left:0px">移动</i><b style="left:24px">(M)</b></span><span class="ms" style="left:690px;top:278px;color:#000"><b style="left:0px">Ctrl+M</b></span><div style="left:575px;top:293px;width:170px;height:18px;background:#0a246a"></div><span class="ms" style="left:592px;top:296px;color:#fff"><i style="left:0px">删除</i><b style="left:24px">(L)</b></span><span class="ms" style="left:690px;top:296px;color:#fff"><b style="left:0px">Del</b></span><span class="ms" style="left:592px;top:314px;color:#000"><i style="left:0px">重命名</i><b style="left:36px">(N)</b></span><span class="ms" style="left:690px;top:314px;color:#000"><b style="left:0px">F2</b></span><span class="ms" style="left:592px;top:332px;color:#000"><i style="left:0px">属性</i><b style="left:24px">(CHMOD)(O)</b></span><span class="ms" style="left:690px;top:332px;color:#000"><b style="left:0px">Ctrl+O</b></span><div style="left:576px;top:350px;width:168px;height:1px;background:#808080"></div><div style="left:576px;top:351px;width:168px;height:1px;background:#ffffff"></div><span class="ms" style="left:592px;top:359px;color:#000"><i style="left:0px">复制到剪贴板</i><b style="left:72px">(S)</b></span><svg style="left:734px;top:360px;" width="8" height="10" viewBox="0 0 8 10"><path d="M2 1 L6 5 L2 9 Z" fill="#000"/></svg><span class="ms" style="left:592px;top:377px;color:#000"><i style="left:0px">命令</i><b style="left:24px">(D)</b></span><svg style="left:734px;top:378px;" width="8" height="10" viewBox="0 0 8 10"><path d="M2 1 L6 5 L2 9 Z" fill="#000"/></svg><div style="left:576px;top:395px;width:168px;height:1px;background:#808080"></div><div style="left:576px;top:396px;width:168px;height:1px;background:#ffffff"></div><span class="ms" style="left:592px;top:404px;color:#000"><i style="left:0px">排列图标</i><b style="left:48px">(X)</b></span><svg style="left:734px;top:405px;" width="8" height="10" viewBox="0 0 8 10"><path d="M2 1 L6 5 L2 9 Z" fill="#000"/></svg><div style="left:576px;top:422px;width:168px;height:1px;background:#808080"></div><div style="left:576px;top:423px;width:168px;height:1px;background:#ffffff"></div><span class="ms" style="left:592px;top:431px;color:#000"><i style="left:0px">建立文件夹</i><b style="left:60px">(Y)</b></span><span class="ms" style="left:690px;top:431px;color:#000"><b style="left:0px">Ins</b></span><span class="ms" style="left:592px;top:449px;color:#000"><i style="left:0px">新建文件</i><b style="left:48px">(Z)</b></span><div style="left:576px;top:467px;width:168px;height:1px;background:#808080"></div><div style="left:576px;top:468px;width:168px;height:1px;background:#ffffff"></div><span class="ms" style="left:592px;top:476px;color:#000"><i style="left:0px">刷新</i><b style="left:24px">(R)</b></span><span class="ms" style="left:690px;top:476px;color:#000"><b style="left:0px">F5</b></span><svg style="left:671px;top:302px;" width="16" height="24" viewBox="0 0 16 24"><path d="M1.5 1.5 V17.5 L5.5 13.5 L8.6 21 L11.6 20 L8.6 12.8 H12.8 Z" fill="#fff" stroke="#000" stroke-width="1" stroke-linejoin="miter"/></svg><svg style="left:0px;top:0px;" width="24" height="24" viewBox="0 0 24 24"><path d="M6.5 10.6 L12.9 7.6 L15.4 14.4 L12.6 17.2 Z" fill="#fff"/><path d="M6.5 10.6 L12.9 7.6 L13.6 9 L7.6 11.8 Z" fill="#7cc4e8"/><path d="M9.2 11.5 L12.2 10.2 L12.6 11.2 L10.6 12.1 L11.1 13.2 L12.4 12.6 L12.8 13.5 L11.5 14.1 L12 15.3 L11 15.7 Z" fill="#000"/><circle cx="17.4" cy="10" r="3.9" fill="#3cc43c"/><path d="M17.6 6.3 A3.9 3.9 0 0 1 21.2 10.4 L18.6 10 Z" fill="#c8d8c8"/><path d="M12.6 16.6 L15.2 14.6 L16.8 19.8 L14.6 18.8 L13.8 19.4 Z" fill="#f08020"/></svg><span class="dis" style="left:20px;top:54px;"><i>本地浏览器</i></span><svg style="left:103px;top:50px;" width="17" height="17" viewBox="0 0 17 17"><defs><linearGradient id="pg" x1="0" x2="1"><stop offset="0" stop-color="#9a9a9a"/><stop offset="0.5" stop-color="#d0d0d0"/><stop offset="1" stop-color="#9a9a9a"/></linearGradient></defs><rect x="1.5" y="0.5" width="5" height="15.5" rx="2.5" fill="url(#pg)" stroke="#8c8c8c"/><rect x="10.5" y="0.5" width="5" height="15.5" rx="2.5" fill="url(#pg)" stroke="#8c8c8c"/></svg><svg style="left:136px;top:47px;" width="14" height="22" viewBox="0 0 14 22"><path d="M2.5 1 V12.5 L11.5 7 Z" fill="#cfcfcf" stroke="#9a9a9a" stroke-linejoin="round"/><circle cx="4.6" cy="18.2" r="3" fill="#dcdcdc" stroke="#8c8c8c"/><circle cx="10.2" cy="18.2" r="3" fill="#dcdcdc" stroke="#8c8c8c"/><path d="M5.8 16.9 A1.4 1.4 0 1 0 5.9 19.3" fill="none" stroke="#505050" stroke-width="1"/><rect x="9.2" y="16.9" width="2" height="2.6" fill="#707070"/></svg><svg style="left:164px;top:57px;" width="6" height="4" viewBox="0 0 6 4"><path d="M0 0 H5 L2.5 3 Z" fill="#000"/></svg><svg style="left:176px;top:45px;" width="28" height="25" viewBox="0 0 28 25"><path d="M25 2.6 C18 2.4 12 4.5 9 8.6 L6.4 7 L5.9 15 L12.8 12.4 L10.6 10.9 C13.5 7.6 18.5 5.6 25 5.2 Z" fill="#f8b440" stroke="#d0781e" stroke-width="0.6" stroke-linejoin="round"/><path d="M15.6 8.8 L25.4 5.4 V9.6 L15.6 12 Z" fill="#f6f6ff" stroke="#b8b8d8" stroke-width="0.5"/><path d="M20.2 7.4 V10.6 M22.4 6.6 V10 M24.4 5.9 V9.5" stroke="#5a8a80" stroke-width="0.9"/><path d="M4 23 C11 23 16.5 21 19.5 16.6 L22.6 18.8 L24 10 L16.5 12.5 L18.8 14 C16 18.5 11 20.5 4 20.8 Z" fill="#18e818" stroke="#10a010" stroke-width="0.5" stroke-linejoin="round"/><circle cx="7" cy="17.4" r="4.9" fill="#0c2f9c"/><circle cx="7.4" cy="17" r="3.9" fill="#1e6fd8"/><path d="M3.4 15.2 C4.6 13 7.6 12.8 9 14.6 C8.4 16.8 6.2 18.4 4.4 18 Z" fill="#c0d820"/><circle cx="9.2" cy="18.6" r="1.1" fill="#50b0f8"/></svg><svg style="left:206px;top:45px;" width="28" height="25" viewBox="0 0 28 25"><path d="M5 6.5 Q5 4.8 7 4.6 L13 4.4 L19 5.2 L22.2 9.6 L25.6 10.4 L21.8 20.2 L13 23.6 L6.4 23.6 Q5 23.4 5 22 Z" fill="#f9e48e" stroke="#e0aa2a" stroke-width="0.9" stroke-linejoin="round"/><path d="M9 9 L20 8.5 L21 18 L10 20 Z" fill="#fcefb0"/><path d="M7 14.8 L25 11" stroke="#ffffff" stroke-width="1.6"/><path d="M5.2 11.8 C6 6 12 3.4 17.5 5 L21.4 3.6 L22.8 10.6 L15.2 10.6 L16.6 8.4 C12.5 7 9.2 8.6 8.4 11.8 Z" fill="#1ee0d4" stroke="#0a8a90" stroke-width="0.6" stroke-linejoin="round"/><path d="M22.6 14.6 C21.8 20.6 15.6 23.2 10.4 21.6 L6 23 L5.2 16 L12.8 16 L11.4 18.2 C15.4 19.6 18.6 18 19.4 14.6 Z" fill="#1ee0d4" stroke="#0a8a90" stroke-width="0.6" stroke-linejoin="round"/></svg><div style="left:237px;top:44px;width:31px;height:30px;background:repeating-conic-gradient(#d4d0c8 0 25%,#ffffff 0 50%) 0 0/2px 2px"></div><div style="left:237px;top:44px;width:31px;height:1px;background:#808080"></div><div style="left:237px;top:44px;width:1px;height:30px;background:#808080"></div><div style="left:237px;top:73px;width:31px;height:1px;background:#ffffff"></div><div style="left:267px;top:44px;width:1px;height:30px;background:#ffffff"></div><svg style="left:238px;top:45px;" width="28" height="27" viewBox="0 0 28 27"><path d="M4.5 5.8 L18.2 4 V16 L4.5 20.6 Z" fill="#f0c63c" stroke="#dca830" stroke-width="0.7"/><path d="M5.2 7 L17.4 5.2 V8 L5.2 9.5 Z" fill="#fbe488"/><path d="M4.6 20.4 L8.4 12 H13 L11 20 Z" fill="#f8e090"/><path d="M19.5 8.5 Q21 7.8 22.2 9.5" fill="none" stroke="#e0b030" stroke-width="0.8"/><path d="M19 10.5 L25 11 V19.2 L19.4 19.2 Z" fill="#d4d8f6" stroke="#7878c8" stroke-width="0.7"/><path d="M21 13 H24 M21 14.5 H24" stroke="#6060b8" stroke-width="0.8"/><ellipse cx="14.5" cy="21.6" rx="4.8" ry="2.1" fill="#e8eafa" stroke="#8a8ad0" stroke-width="0.6"/><path d="M13.5 18.5 H16 V20.5 H13.5 Z" fill="#7070c0"/><path d="M10.5 11 L18.6 9.6 L19 18 L11.5 19.5 Z" fill="#38b4fa" stroke="#8080d8" stroke-width="0.8"/><path d="M11.5 12 L17.8 10.8 L18 13.5 L11.8 14.8 Z" fill="#7ad8ff" opacity="0.7"/></svg><svg style="left:485px;top:45px;" width="26" height="26" viewBox="0 0 26 26"><defs><linearGradient id="bg" x1="0" y1="0" x2="1" y2="0"><stop offset="0" stop-color="#a8a8a8"/><stop offset="0.6" stop-color="#cfcfcf"/><stop offset="1" stop-color="#b8b8b8"/></linearGradient></defs><path d="M24.2 2.4 L15.5 10.4 L10.5 7.2 L2.4 23.7 L12.4 14.3 L16.5 17.4 Z" fill="url(#bg)" stroke="#858585" stroke-width="1" stroke-linejoin="round"/></svg><svg style="left:515px;top:45px;" width="28" height="26" viewBox="0 0 28 26"><path d="M3.3 23.7 L8 19.8 M21 6.4 L25.2 2.4" stroke="#303030" stroke-width="1.3"/><path d="M15.2 11 L13 13.2 M16.8 12.6 L14.6 14.8" stroke="#303030" stroke-width="1.2"/><path d="M20.8 5.6 L21.6 6.6 L18.6 13.6 L14.2 9.2 Z" fill="#62b2f2" stroke="#3888d8" stroke-width="0.8" stroke-linejoin="round"/><path d="M10.2 12.8 L14.2 16.8 L7.4 20.6 L6.8 19.8 Z" fill="#62b2f2" stroke="#3888d8" stroke-width="0.8" stroke-linejoin="round"/><path d="M17.2 8.6 L19.6 7.4 L17.6 11.4 Z" fill="#d2ecff"/><path d="M10.4 15 L12 16.6 L9 18.6 Z" fill="#d2ecff"/></svg><svg style="left:544px;top:44px;" width="30" height="28" viewBox="0 0 30 28"><path d="M6.5 8.6 Q8 7 10 8.6 Q16 14 22.6 21.8 Q15 15.5 7.2 10.4 Q6 9.6 6.5 8.6 Z" fill="#e80000" stroke="#e80000" stroke-width="0.8" stroke-linejoin="round"/><path d="M25.8 6 Q25 4.6 23.4 5.4 Q14 12 7.2 24.8 Q15 15 25 7.6 Q26 7 25.8 6 Z" fill="#e80000" stroke="#e80000" stroke-width="0.8" stroke-linejoin="round"/></svg><svg style="left:583px;top:50px;" width="17" height="17" viewBox="0 0 17 17"><defs><linearGradient id="pg" x1="0" x2="1"><stop offset="0" stop-color="#9a9a9a"/><stop offset="0.5" stop-color="#d0d0d0"/><stop offset="1" stop-color="#9a9a9a"/></linearGradient></defs><rect x="1.5" y="0.5" width="5" height="15.5" rx="2.5" fill="url(#pg)" stroke="#8c8c8c"/><rect x="10.5" y="0.5" width="5" height="15.5" rx="2.5" fill="url(#pg)" stroke="#8c8c8c"/></svg><svg style="left:616px;top:47px;" width="14" height="22" viewBox="0 0 14 22"><path d="M2.5 1 V12.5 L11.5 7 Z" fill="#cfcfcf" stroke="#9a9a9a" stroke-linejoin="round"/><circle cx="4.6" cy="18.2" r="3" fill="#dcdcdc" stroke="#8c8c8c"/><circle cx="10.2" cy="18.2" r="3" fill="#dcdcdc" stroke="#8c8c8c"/><path d="M5.8 16.9 A1.4 1.4 0 1 0 5.9 19.3" fill="none" stroke="#505050" stroke-width="1"/><rect x="9.2" y="16.9" width="2" height="2.6" fill="#707070"/></svg><svg style="left:644px;top:57px;" width="6" height="4" viewBox="0 0 6 4"><path d="M0 0 H5 L2.5 3 Z" fill="#000"/></svg><svg style="left:656px;top:45px;" width="28" height="25" viewBox="0 0 28 25"><path d="M25 2.6 C18 2.4 12 4.5 9 8.6 L6.4 7 L5.9 15 L12.8 12.4 L10.6 10.9 C13.5 7.6 18.5 5.6 25 5.2 Z" fill="#f8b440" stroke="#d0781e" stroke-width="0.6" stroke-linejoin="round"/><path d="M15.6 8.8 L25.4 5.4 V9.6 L15.6 12 Z" fill="#f6f6ff" stroke="#b8b8d8" stroke-width="0.5"/><path d="M20.2 7.4 V10.6 M22.4 6.6 V10 M24.4 5.9 V9.5" stroke="#5a8a80" stroke-width="0.9"/><path d="M4 23 C11 23 16.5 21 19.5 16.6 L22.6 18.8 L24 10 L16.5 12.5 L18.8 14 C16 18.5 11 20.5 4 20.8 Z" fill="#18e818" stroke="#10a010" stroke-width="0.5" stroke-linejoin="round"/><circle cx="7" cy="17.4" r="4.9" fill="#0c2f9c"/><circle cx="7.4" cy="17" r="3.9" fill="#1e6fd8"/><path d="M3.4 15.2 C4.6 13 7.6 12.8 9 14.6 C8.4 16.8 6.2 18.4 4.4 18 Z" fill="#c0d820"/><circle cx="9.2" cy="18.6" r="1.1" fill="#50b0f8"/></svg><svg style="left:686px;top:45px;" width="28" height="25" viewBox="0 0 28 25"><path d="M5 6.5 Q5 4.8 7 4.6 L13 4.4 L19 5.2 L22.2 9.6 L25.6 10.4 L21.8 20.2 L13 23.6 L6.4 23.6 Q5 23.4 5 22 Z" fill="#f9e48e" stroke="#e0aa2a" stroke-width="0.9" stroke-linejoin="round"/><path d="M9 9 L20 8.5 L21 18 L10 20 Z" fill="#fcefb0"/><path d="M7 14.8 L25 11" stroke="#ffffff" stroke-width="1.6"/><path d="M5.2 11.8 C6 6 12 3.4 17.5 5 L21.4 3.6 L22.8 10.6 L15.2 10.6 L16.6 8.4 C12.5 7 9.2 8.6 8.4 11.8 Z" fill="#1ee0d4" stroke="#0a8a90" stroke-width="0.6" stroke-linejoin="round"/><path d="M22.6 14.6 C21.8 20.6 15.6 23.2 10.4 21.6 L6 23 L5.2 16 L12.8 16 L11.4 18.2 C15.4 19.6 18.6 18 19.4 14.6 Z" fill="#1ee0d4" stroke="#0a8a90" stroke-width="0.6" stroke-linejoin="round"/></svg><svg style="left:714px;top:42px;" width="34" height="30" viewBox="0 0 34 30"><defs><radialGradient id="gg" cx="0.45" cy="0.4" r="0.6"><stop offset="0" stop-color="#2a8ae8"/><stop offset="0.75" stop-color="#1450c0"/><stop offset="1" stop-color="#082a90"/></radialGradient><linearGradient id="scr" x1="0" y1="0" x2="0" y2="1"><stop offset="0" stop-color="#8ae0ff"/><stop offset="1" stop-color="#2aa0f4"/></linearGradient></defs><circle cx="14.7" cy="13.5" r="8.3" fill="url(#gg)"/><path d="M9 7.5 Q12 5.2 15.5 6 L18.5 9.5 L16.5 14 L14.5 17 L12 18.5 L10.2 14.5 L8 11 Z" fill="#b4dc1c"/><circle cx="14" cy="11" r="2.4" fill="#e8f010"/><circle cx="14.5" cy="8.5" r="0.8" fill="#2a8ae8"/><path d="M21.5 14 L28 14.6 V22.6 L22 22.6 Z" fill="#d6daf6" stroke="#8080c8" stroke-width="0.7"/><path d="M23.5 16 H26.5 M23.5 17.6 H26.5" stroke="#5a5ab8" stroke-width="0.8"/><ellipse cx="17.5" cy="25.2" rx="5" ry="2.1" fill="#eceefc" stroke="#9090d0" stroke-width="0.6"/><path d="M16.5 22 H19 V24 H16.5 Z" fill="#7070c0"/><path d="M13.2 13.4 L21.8 12.8 L22 22.6 L14 23.2 Z" fill="url(#scr)" stroke="#8a8ad8" stroke-width="0.8"/></svg><svg style="left:13px;top:82px;" width="18" height="18" viewBox="0 0 18 18"><defs><linearGradient id="drv" x1="0" y1="0" x2="0" y2="1"><stop offset="0" stop-color="#c8d0e0"/><stop offset="0.35" stop-color="#ffffff"/><stop offset="0.7" stop-color="#8890a8"/><stop offset="1" stop-color="#1a2a6a"/></linearGradient><linearGradient id="tfd" x1="0" y1="0" x2="0" y2="1"><stop offset="0" stop-color="#e8b840"/><stop offset="0.5" stop-color="#f8dc80"/><stop offset="1" stop-color="#d8a030"/></linearGradient></defs><rect x="1" y="1.2" width="10" height="4" rx="1.2" fill="url(#drv)" stroke="#304080" stroke-width="0.6"/><rect x="8" y="2" width="1.4" height="1.4" fill="#10a010"/><rect x="4" y="6.5" width="1" height="1" fill="#7080a0"/><rect x="4" y="12.4" width="1" height="1" fill="#7080a0"/><path d="M4.5 7.9 L6 9.4 L4.5 10.9 L3 9.4 Z M4.5 13.9 L6 15.4 L4.5 16.9 L3 15.4 Z" fill="#202020" stroke="#202020" stroke-width="0.6"/><rect x="7" y="9" width="1" height="1" fill="#7080a0"/><rect x="9" y="9" width="1" height="1" fill="#7080a0"/><rect x="7" y="15" width="1" height="1" fill="#7080a0"/><rect x="9" y="15" width="1" height="1" fill="#7080a0"/><path d="M10 7 H11 L11.5 6 H14 L14.5 7 H17 V11 H10 Z" fill="url(#tfd)" stroke="#d09a28" stroke-width="0.5"/><path d="M10 13 H11 L11.5 12 H14 L14.5 13 H17 V17 H10 Z" fill="url(#tfd)" stroke="#d09a28" stroke-width="0.5"/></svg><svg style="left:34px;top:80px;" width="22" height="22" viewBox="0 0 22 22"><defs><linearGradient id="stg" x1="0" y1="0" x2="1" y2="1"><stop offset="0" stop-color="#fff080"/><stop offset="0.5" stop-color="#f8c810"/><stop offset="1" stop-color="#f0d040"/></linearGradient></defs><path d="M11.00 3.20 L13.53 7.92 L18.80 8.87 L15.09 12.73 L15.82 18.03 L11.00 15.70 L6.18 18.03 L6.91 12.73 L3.20 8.87 L8.47 7.92 Z" fill="url(#stg)" stroke="#b89020" stroke-width="0.9" stroke-linejoin="round"/></svg><svg style="left:58px;top:80px;" width="20" height="20" viewBox="0 0 20 20"><path d="M2.5 4.5 Q2.5 3.6 3.5 3.6 L14.5 3.4 V7 H17.5 L15 16 L2.5 17.5 Z" fill="#f4d868" stroke="#d0a030" stroke-width="0.8" stroke-linejoin="round"/><path d="M4 9 L16.8 7.6 L14.6 15.6 L3 17 Z" fill="#fbeeb0"/><path d="M8.3 4 L13.6 8.6 L11.2 8.8 C11.4 12 10 14.8 7.6 16.6 C8.8 14 9 11.5 8.4 8.9 L5.2 8.8 Z" fill="#2cc42c" stroke="#0e8a0e" stroke-width="0.7" stroke-linejoin="round"/><path d="M9.6 9 C10 11.5 9.6 13.5 8.8 15" stroke="#8af08a" stroke-width="0.9" fill="none"/></svg><svg style="left:489px;top:82px;" width="18" height="18" viewBox="0 0 18 18"><defs><linearGradient id="drv" x1="0" y1="0" x2="0" y2="1"><stop offset="0" stop-color="#c8d0e0"/><stop offset="0.35" stop-color="#ffffff"/><stop offset="0.7" stop-color="#8890a8"/><stop offset="1" stop-color="#1a2a6a"/></linearGradient><linearGradient id="tfd" x1="0" y1="0" x2="0" y2="1"><stop offset="0" stop-color="#e8b840"/><stop offset="0.5" stop-color="#f8dc80"/><stop offset="1" stop-color="#d8a030"/></linearGradient></defs><rect x="1" y="1.2" width="10" height="4" rx="1.2" fill="url(#drv)" stroke="#304080" stroke-width="0.6"/><rect x="8" y="2" width="1.4" height="1.4" fill="#10a010"/><rect x="4" y="6.5" width="1" height="1" fill="#7080a0"/><rect x="4" y="12.4" width="1" height="1" fill="#7080a0"/><path d="M4.5 7.9 L6 9.4 L4.5 10.9 L3 9.4 Z M4.5 13.9 L6 15.4 L4.5 16.9 L3 15.4 Z" fill="#202020" stroke="#202020" stroke-width="0.6"/><rect x="7" y="9" width="1" height="1" fill="#7080a0"/><rect x="9" y="9" width="1" height="1" fill="#7080a0"/><rect x="7" y="15" width="1" height="1" fill="#7080a0"/><rect x="9" y="15" width="1" height="1" fill="#7080a0"/><path d="M10 7 H11 L11.5 6 H14 L14.5 7 H17 V11 H10 Z" fill="url(#tfd)" stroke="#d09a28" stroke-width="0.5"/><path d="M10 13 H11 L11.5 12 H14 L14.5 13 H17 V17 H10 Z" fill="url(#tfd)" stroke="#d09a28" stroke-width="0.5"/></svg><svg style="left:510px;top:80px;" width="22" height="22" viewBox="0 0 22 22"><defs><linearGradient id="stg" x1="0" y1="0" x2="1" y2="1"><stop offset="0" stop-color="#fff080"/><stop offset="0.5" stop-color="#f8c810"/><stop offset="1" stop-color="#f0d040"/></linearGradient></defs><path d="M11.00 3.20 L13.53 7.92 L18.80 8.87 L15.09 12.73 L15.82 18.03 L11.00 15.70 L6.18 18.03 L6.91 12.73 L3.20 8.87 L8.47 7.92 Z" fill="url(#stg)" stroke="#b89020" stroke-width="0.9" stroke-linejoin="round"/></svg><svg style="left:534px;top:80px;" width="20" height="20" viewBox="0 0 20 20"><path d="M2.5 4.5 Q2.5 3.6 3.5 3.6 L14.5 3.4 V7 H17.5 L15 16 L2.5 17.5 Z" fill="#f4d868" stroke="#d0a030" stroke-width="0.8" stroke-linejoin="round"/><path d="M4 9 L16.8 7.6 L14.6 15.6 L3 17 Z" fill="#fbeeb0"/><path d="M8.3 4 L13.6 8.6 L11.2 8.8 C11.4 12 10 14.8 7.6 16.6 C8.8 14 9 11.5 8.4 8.9 L5.2 8.8 Z" fill="#2cc42c" stroke="#0e8a0e" stroke-width="0.7" stroke-linejoin="round"/><path d="M9.6 9 C10 11.5 9.6 13.5 8.8 15" stroke="#8af08a" stroke-width="0.9" fill="none"/></svg><svg style="left:86px;top:83px;" width="16" height="16" viewBox="0 0 16 16"><defs><linearGradient id="fg1" x1="0" x2="1"><stop offset="0" stop-color="#edcc5c"/><stop offset="0.5" stop-color="#f9e898"/><stop offset="1" stop-color="#e8c454"/></linearGradient><linearGradient id="fg2" x1="0" x2="1"><stop offset="0" stop-color="#dcb43c"/><stop offset="0.4" stop-color="#f2d878"/><stop offset="1" stop-color="#deb640"/></linearGradient></defs><path d="M5.5 0.5 H12.2 V6.5 H13.2 V14.6 H5.5 Z" fill="url(#fg2)" stroke="#dcb850" stroke-width="0.8"/><path d="M0.5 0.8 Q0.5 0.3 1 0.3 H5.8 V15.2 Q3 16.2 0.5 15.2 Z" fill="url(#fg1)" stroke="#dcbc58" stroke-width="0.8"/><rect x="2.2" y="1.5" width="1.2" height="7" fill="#ffffff" opacity="0.85"/><rect x="11.2" y="8" width="1.3" height="3" fill="#f4f8ff"/><rect x="11.2" y="11" width="1.3" height="2.5" fill="#2a9ae8"/></svg><svg style="left:564px;top:83px;" width="16" height="16" viewBox="0 0 16 16"><defs><linearGradient id="fg1" x1="0" x2="1"><stop offset="0" stop-color="#edcc5c"/><stop offset="0.5" stop-color="#f9e898"/><stop offset="1" stop-color="#e8c454"/></linearGradient><linearGradient id="fg2" x1="0" x2="1"><stop offset="0" stop-color="#dcb43c"/><stop offset="0.4" stop-color="#f2d878"/><stop offset="1" stop-color="#deb640"/></linearGradient></defs><path d="M5.5 0.5 H12.2 V6.5 H13.2 V14.6 H5.5 Z" fill="url(#fg2)" stroke="#dcb850" stroke-width="0.8"/><path d="M0.5 0.8 Q0.5 0.3 1 0.3 H5.8 V15.2 Q3 16.2 0.5 15.2 Z" fill="url(#fg1)" stroke="#dcbc58" stroke-width="0.8"/><rect x="2.2" y="1.5" width="1.2" height="7" fill="#ffffff" opacity="0.85"/><rect x="11.2" y="8" width="1.3" height="3" fill="#f4f8ff"/><rect x="11.2" y="11" width="1.3" height="2.5" fill="#2a9ae8"/></svg><svg style="left:44px;top:111px;" width="9" height="6" viewBox="0 0 9 6"><path d="M1 5 L4.5 1 L8 5 Z" fill="#747474"/><path d="M0.6 5 L4.5 0.6" stroke="#fff" stroke-width="0.6"/></svg><svg style="left:522px;top:111px;" width="9" height="6" viewBox="0 0 9 6"><path d="M1 5 L4.5 1 L8 5 Z" fill="#747474"/><path d="M0.6 5 L4.5 0.6" stroke="#fff" stroke-width="0.6"/></svg></body></html>
